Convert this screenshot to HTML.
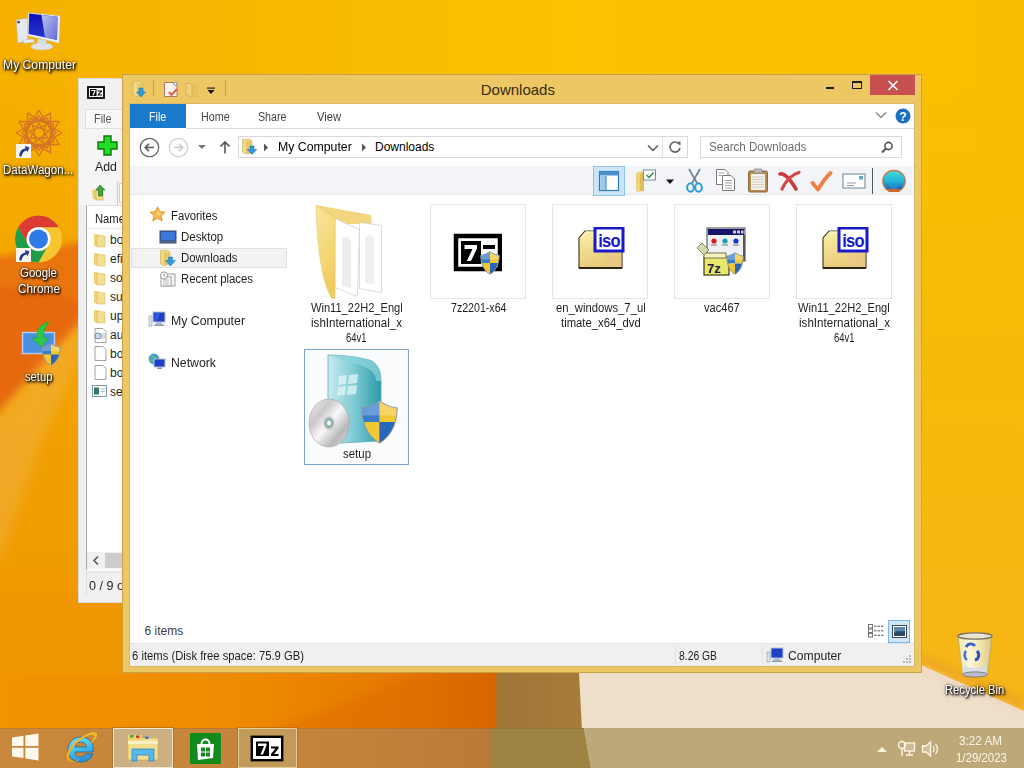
<!DOCTYPE html>
<html><head><meta charset="utf-8">
<style>
*{box-sizing:border-box}
html,body{margin:0;padding:0}
body{width:1024px;height:768px;overflow:hidden;position:relative;font-family:"Liberation Sans",sans-serif;font-size:12px;color:#000;background:#F5B400}
.a{position:absolute;display:block}
.t{position:absolute;white-space:nowrap;line-height:1}
.sh{text-shadow:0 0 2px #000,1px 1px 2px #000,0 1px 1px #000}
</style></head><body>
<svg class="a" style="left:0;top:0" width="1024" height="768" viewBox="0 0 1024 768">
  <defs>
    <linearGradient id="gTop" x1="0" y1="0" x2="1" y2="0">
      <stop offset="0" stop-color="#F5B000"/><stop offset="0.55" stop-color="#FBC200"/><stop offset="1" stop-color="#FABE00"/>
    </linearGradient>
    <linearGradient id="gBotL" x1="0" y1="0" x2="1" y2="0">
      <stop offset="0" stop-color="#F19400"/><stop offset="0.5" stop-color="#EE8A00"/><stop offset="0.85" stop-color="#E47600"/><stop offset="1" stop-color="#D66200"/>
    </linearGradient>
    <linearGradient id="gLeft" x1="0" y1="0" x2="0" y2="1">
      <stop offset="0" stop-color="#F4A600" stop-opacity="0"/><stop offset="0.25" stop-color="#F4A600"/><stop offset="0.6" stop-color="#F09E00"/><stop offset="1" stop-color="#F09400"/>
    </linearGradient>
    <linearGradient id="gRight" x1="0" y1="0" x2="0" y2="1">
      <stop offset="0" stop-color="#F8BA08" stop-opacity="0"/><stop offset="0.4" stop-color="#F8BA08"/><stop offset="1" stop-color="#F5B61C"/>
    </linearGradient>
    <filter id="bl1" x="-5%" y="-5%" width="110%" height="110%"><feGaussianBlur stdDeviation="1.2"/></filter>
    <filter id="bl3" x="-20%" y="-20%" width="140%" height="140%"><feGaussianBlur stdDeviation="3"/></filter>
    <filter id="bl6" x="-30%" y="-30%" width="160%" height="160%"><feGaussianBlur stdDeviation="7"/></filter>
  </defs>
  <rect x="0" y="0" width="1024" height="768" fill="url(#gTop)"/>
  <g filter="url(#bl6)"><rect x="-20" y="80" width="150" height="700" fill="url(#gLeft)"/></g>
  <rect x="900" y="80" width="130" height="688" fill="url(#gRight)"/>
  <g filter="url(#bl3)">
    <path d="M-10 258 C20 254 60 246 130 232 L130 268 L80 324 L0 411 L-10 422 Z" fill="#E97610"/>
    <path d="M-10 285 C20 286 50 292 80 300 L80 324 L0 411 L-10 422 Z" fill="#E4640C" opacity="0.7"/>
  </g>
  <g filter="url(#bl6)">
    <path d="M80 322 L90 332 L42 440 L0 560 L-10 560 L-10 424 L0 413 Z" fill="#F2B24A" opacity="0.5"/>
  </g>
  <rect x="0" y="600" width="500" height="168" fill="url(#gBotL)"/>
  <g filter="url(#bl6)"><rect x="-20" y="590" width="150" height="200" fill="#F09600"/></g>
  <rect x="0" y="675" width="500" height="93" fill="url(#gBotL)"/>
  <g filter="url(#bl6)"><path d="M250 740 L420 673 L500 660 L500 740 Z" fill="#DC6400" opacity="0.45"/></g>
  <defs><linearGradient id="brg" x1="0" y1="0" x2="1" y2="0"><stop offset="0" stop-color="#9E7636"/><stop offset="1" stop-color="#A87C3C"/></linearGradient></defs><g filter="url(#bl1)"><path d="M496 560 L576 560 L587 768 L496 768 Z" fill="url(#brg)"/></g>
  <g filter="url(#bl3)"><path d="M921 652 L1024 698 L1024 711 L921 665 Z" fill="#EFA624" opacity="0.75"/></g>
  <path d="M573 560 L921 560 L921 665 L1024 711 L1024 768 L584 768 Z" fill="#EEDFC9"/>
  <g filter="url(#bl3)"><path d="M921 666 L1024 712 L1024 716 L921 670 Z" fill="#F2CFB0" opacity="0.6"/></g>
  
</svg>
<div class="t" style="left:2.50px;top:59.44px;font-size:12px;color:#fff;transform:scaleX(1.0134);transform-origin:0 0;text-shadow:1px 1px 2px #000,0 0 3px rgba(0,0,0,0.9),1px 2px 3px rgba(0,0,0,0.8);">My Computer</div>
<div class="t" style="left:3.45px;top:163.64px;font-size:12px;color:#fff;transform:scaleX(0.9638);transform-origin:0 0;text-shadow:1px 1px 2px #000,0 0 3px rgba(0,0,0,0.9),1px 2px 3px rgba(0,0,0,0.8);">DataWagon...</div>
<div class="t" style="left:19.50px;top:267.34px;font-size:12px;color:#fff;transform:scaleX(0.9560);transform-origin:0 0;text-shadow:1px 1px 2px #000,0 0 3px rgba(0,0,0,0.9),1px 2px 3px rgba(0,0,0,0.8);">Google</div>
<div class="t" style="left:18.00px;top:282.54px;font-size:12px;color:#fff;transform:scaleX(0.9839);transform-origin:0 0;text-shadow:1px 1px 2px #000,0 0 3px rgba(0,0,0,0.9),1px 2px 3px rgba(0,0,0,0.8);">Chrome</div>
<div class="t" style="left:24.60px;top:371.34px;font-size:12px;color:#fff;transform:scaleX(0.9333);transform-origin:0 0;text-shadow:1px 1px 2px #000,0 0 3px rgba(0,0,0,0.9),1px 2px 3px rgba(0,0,0,0.8);">setup</div>
<div class="t" style="left:945.20px;top:683.64px;font-size:12px;color:#fff;transform:scaleX(0.9344);transform-origin:0 0;text-shadow:1px 1px 2px #000,0 0 3px rgba(0,0,0,0.9),1px 2px 3px rgba(0,0,0,0.8);">Recycle Bin</div>
<div class="a" style="left:78px;top:78px;width:50px;height:525px;background:#F0F0F0;border:1px solid #DADADA"></div>
<svg class="a" style="left:87px;top:86px;" width="18" height="13" viewBox="0 0 18 13"><rect x="1" y="1" width="16" height="11" fill="#fff" stroke="#000" stroke-width="1.8"/><rect x="3" y="3" width="6.5" height="7" fill="#000"/><path d="M4 4 H8.5 V5 L6.5 9.5 H5.3 L7.2 5 H4 Z" fill="#fff"/><path d="M10.5 4.5 H15 V5.5 L12 8.5 H15 V9.5 H10.5 V8.5 L13.5 5.5 H10.5 Z" fill="#000"/></svg>
<div class="a" style="left:85px;top:109px;width:40px;height:20px;background:#F8F8F8;border:1px solid #E0E0E0;border-right:none"></div>
<div class="t" style="left:94.00px;top:112.84px;font-size:12px;color:#555;transform:scaleX(0.9047);transform-origin:0 0;">File</div>
<div class="a" style="left:79px;top:129px;width:48px;height:76px;background:#F5F5F5"></div>
<svg class="a" style="left:97px;top:135px;" width="21" height="21" viewBox="0 0 21 21"><path d="M7 1 H14 V7 H20 V14 H14 V20 H7 V14 H1 V7 H7 Z" fill="#22DD22" stroke="#0A7A0A" stroke-width="1.4"/></svg>
<div class="t" style="left:95.00px;top:160.84px;font-size:12px;color:#222;transform:scaleX(1.0300);transform-origin:0 0;">Add</div>
<svg class="a" style="left:91px;top:184px;" width="16" height="17" viewBox="0 0 16 17"><path d="M1 6 L7 5 L7 16 L2 15 Z" fill="#E8D070"/><path d="M5 6 L12 7 L12 16 L5 16 Z" fill="#F2DC88" stroke="#B8A040" stroke-width="0.5"/><path d="M9 1 L14 6 L11.5 6 L11.5 12 L7.5 12 L7.5 6 L5 6 Z" fill="#3CA83C" stroke="#1A6A1A" stroke-width="0.6"/></svg>
<div class="a" style="left:117px;top:181px;width:1px;height:24px;background:#C8C8C8"></div>
<div class="a" style="left:119px;top:183px;width:5px;height:20px;background:#fff;border:1px solid #D0D0D0;border-right:none"></div>
<div class="a" style="left:86px;top:205px;width:40px;height:397px;background:#fff;border-left:1px solid #A8A8A8;border-top:1px solid #E0E0E0"></div>
<div class="t" style="left:94.60px;top:213.04px;font-size:12px;color:#1E1E1E;transform:scaleX(0.9370);transform-origin:0 0;">Name</div>
<div class="a" style="left:87px;top:228px;width:36px;height:1px;background:#E8E8E8"></div>
<svg class="a" style="left:93px;top:233.0px;" width="13" height="15" viewBox="0 0 13 15"><path d="M1 1 L6 1.5 L6 14 L1 13 Z" fill="#EFD27A"/><path d="M4 2.5 L12 3 L12 14 L4 14 Z" fill="#F3DE92" stroke="#D0B050" stroke-width="0.5"/></svg>
<div class="t" style="left:110.00px;top:234.34px;font-size:12px;color:#1E1E1E;">bo</div>
<svg class="a" style="left:93px;top:251.9px;" width="13" height="15" viewBox="0 0 13 15"><path d="M1 1 L6 1.5 L6 14 L1 13 Z" fill="#EFD27A"/><path d="M4 2.5 L12 3 L12 14 L4 14 Z" fill="#F3DE92" stroke="#D0B050" stroke-width="0.5"/></svg>
<div class="t" style="left:110.00px;top:253.24px;font-size:12px;color:#1E1E1E;">efi</div>
<svg class="a" style="left:93px;top:270.8px;" width="13" height="15" viewBox="0 0 13 15"><path d="M1 1 L6 1.5 L6 14 L1 13 Z" fill="#EFD27A"/><path d="M4 2.5 L12 3 L12 14 L4 14 Z" fill="#F3DE92" stroke="#D0B050" stroke-width="0.5"/></svg>
<div class="t" style="left:110.00px;top:272.14px;font-size:12px;color:#1E1E1E;">so</div>
<svg class="a" style="left:93px;top:289.7px;" width="13" height="15" viewBox="0 0 13 15"><path d="M1 1 L6 1.5 L6 14 L1 13 Z" fill="#EFD27A"/><path d="M4 2.5 L12 3 L12 14 L4 14 Z" fill="#F3DE92" stroke="#D0B050" stroke-width="0.5"/></svg>
<div class="t" style="left:110.00px;top:291.04px;font-size:12px;color:#1E1E1E;">su</div>
<svg class="a" style="left:93px;top:308.6px;" width="13" height="15" viewBox="0 0 13 15"><path d="M1 1 L6 1.5 L6 14 L1 13 Z" fill="#EFD27A"/><path d="M4 2.5 L12 3 L12 14 L4 14 Z" fill="#F3DE92" stroke="#D0B050" stroke-width="0.5"/></svg>
<div class="t" style="left:110.00px;top:309.94px;font-size:12px;color:#1E1E1E;">up</div>
<svg class="a" style="left:93px;top:327.5px;" width="14" height="15" viewBox="0 0 14 15"><path d="M2 0.5 H10 L13 3.5 V14.5 H2 Z" fill="#fff" stroke="#8A8A8A" stroke-width="0.8"/><circle cx="5" cy="8" r="3" fill="#C8D8E8" stroke="#4A6A8A" stroke-width="0.7"/><path d="M8 6 H12 M8 8 H12 M8 10 H12" stroke="#888" stroke-width="0.6"/></svg>
<div class="t" style="left:110.00px;top:328.84px;font-size:12px;color:#1E1E1E;">au</div>
<svg class="a" style="left:93px;top:346.4px;" width="14" height="15" viewBox="0 0 14 15"><path d="M2 0.5 H10 L13 3.5 V14.5 H2 Z" fill="#fff" stroke="#8A8A8A" stroke-width="0.8"/></svg>
<div class="t" style="left:110.00px;top:347.74px;font-size:12px;color:#1E1E1E;">bo</div>
<svg class="a" style="left:93px;top:365.29999999999995px;" width="14" height="15" viewBox="0 0 14 15"><path d="M2 0.5 H10 L13 3.5 V14.5 H2 Z" fill="#fff" stroke="#8A8A8A" stroke-width="0.8"/></svg>
<div class="t" style="left:110.00px;top:366.64px;font-size:12px;color:#1E1E1E;">bo</div>
<svg class="a" style="left:92px;top:384.2px;" width="16" height="14" viewBox="0 0 16 14"><rect x="0.5" y="1.5" width="14" height="11" fill="#fff" stroke="#5A7A8A" stroke-width="0.8"/><rect x="2" y="3.5" width="5" height="7" fill="#2E7A6A"/><path d="M8.5 5 H13 M8.5 7.5 H13" stroke="#8AA8C8" stroke-width="0.8"/></svg>
<div class="t" style="left:110.00px;top:385.54px;font-size:12px;color:#1E1E1E;">se</div>
<div class="a" style="left:87px;top:552px;width:36px;height:17px;background:#F0F0F0"></div>
<svg class="a" style="left:91px;top:555px;" width="10" height="11" viewBox="0 0 10 11"><path d="M7 1.5 L3 5.5 L7 9.5" fill="none" stroke="#555" stroke-width="1.6"/></svg>
<div class="a" style="left:105px;top:553px;width:18px;height:15px;background:#CDCDCD"></div>
<div class="a" style="left:79px;top:570px;width:48px;height:32px;background:#F0F0F0"></div>
<div class="a" style="left:86px;top:572px;width:40px;height:24px;border-left:1px solid #E0E0E0;border-top:1px solid #E0E0E0"></div>
<div class="t" style="left:88.50px;top:580.34px;font-size:12px;color:#1E1E1E;transform:scaleX(1.0492);transform-origin:0 0;">0 / 9 o</div>
<div class="a" style="left:122px;top:74px;width:800px;height:599px;background:#ECC763;border:1px solid #C9A04A"></div>
<div class="a" style="left:130px;top:104px;width:784px;height:562px;background:#fff;box-shadow:0 0 0 1px #D9B866"></div>
<div class="t" style="left:480.75px;top:82.30px;font-size:15px;color:#3A2C14;">Downloads</div>
<div class="a" style="left:870px;top:75px;width:45px;height:20px;background:#C75050"></div>
<svg class="a" style="left:131px;top:80px;" width="16" height="18" viewBox="0 0 16 18">
<path d="M2 2 L8 1 L12 3 L12 15 L6 17 L2 15 Z" fill="#F1D98A" stroke="#C9A94A" stroke-width="0.6"/>
<path d="M6 4 L12 3 L12 15 L6 17 Z" fill="#E6C766"/>
<path d="M8 8 L12 8 L12 12 L14.5 12 L10 17 L5.5 12 L8 12 Z" fill="#2C9BE0" stroke="#1A6FB0" stroke-width="0.5"/>
</svg>
<div class="a" style="left:153px;top:80px;width:1px;height:16px;background:#C9A050"></div>
<svg class="a" style="left:163px;top:81px;" width="16" height="17" viewBox="0 0 16 17">
<path d="M1.5 1.5 L10 1.5 L14 5 L14 15.5 L1.5 15.5 Z" fill="#FBF3EE" stroke="#B07A60" stroke-width="1"/>
<circle cx="12.5" cy="2.8" r="1.6" fill="#fff" stroke="#5A70A0" stroke-width="0.8"/>
<path d="M6 11 L8.5 14 L14 8" fill="none" stroke="#E06050" stroke-width="2"/>
</svg>
<svg class="a" style="left:185px;top:82px;" width="15" height="16" viewBox="0 0 15 16">
<path d="M1 1 L7 2 L7 15 L1 13 Z" fill="#EFD27A"/>
<path d="M7 2 L13 3 L13 15 L7 15 Z" fill="#E3C35A"/>
<path d="M1 1 L7 2 L7 15 L1 13 Z" fill="none" stroke="#CBA645" stroke-width="0.6"/>
</svg>
<svg class="a" style="left:206px;top:86px;" width="10" height="9" viewBox="0 0 10 9"><rect x="1" y="1.5" width="8" height="1.2" fill="#222"/><path d="M1.5 4 L8.5 4 L5 8 Z" fill="#111"/></svg>
<div class="a" style="left:225px;top:80px;width:1px;height:16px;background:#C9A050"></div>
<div class="a" style="left:826px;top:87px;width:8px;height:2px;background:#1E1E1E"></div>
<div class="a" style="left:852px;top:81px;width:10px;height:8px;border:1px solid #1E1E1E;border-top-width:2px"></div>
<svg class="a" style="left:887px;top:80px;" width="12" height="11" viewBox="0 0 12 11"><path d="M1.5 1 L10.5 10 M10.5 1 L1.5 10" stroke="#fff" stroke-width="1.6"/></svg>
<div class="a" style="left:130px;top:104px;width:56px;height:24px;background:#1979CA"></div>
<div class="t" style="left:149.40px;top:110.84px;font-size:12px;color:#fff;transform:scaleX(0.8892);transform-origin:0 0;">File</div>
<div class="t" style="left:200.60px;top:110.84px;font-size:12px;color:#444;transform:scaleX(0.8933);transform-origin:0 0;">Home</div>
<div class="t" style="left:258.00px;top:110.84px;font-size:12px;color:#444;transform:scaleX(0.8866);transform-origin:0 0;">Share</div>
<div class="t" style="left:316.70px;top:110.84px;font-size:12px;color:#444;transform:scaleX(0.9342);transform-origin:0 0;">View</div>
<div class="a" style="left:186px;top:128px;width:728px;height:1px;background:#DADBDC"></div>
<svg class="a" style="left:875px;top:111px;" width="12" height="8" viewBox="0 0 12 8"><path d="M1 1.5 L6 6.5 L11 1.5" fill="none" stroke="#8A8A8A" stroke-width="1.5"/></svg>
<svg class="a" style="left:895px;top:108px;" width="16" height="16" viewBox="0 0 16 16"><circle cx="8" cy="8" r="7.5" fill="#1C6FC4"/><text x="8" y="12.6" text-anchor="middle" font-family="Liberation Sans" font-weight="bold" font-size="12" fill="#fff">?</text></svg>
<svg class="a" style="left:139px;top:137px;" width="21" height="21" viewBox="0 0 21 21"><circle cx="10.5" cy="10.5" r="9.2" fill="#fff" stroke="#666" stroke-width="1.3"/><path d="M15 10.5 L6.5 10.5 M10 6.8 L6.3 10.5 L10 14.2" fill="none" stroke="#555" stroke-width="1.6"/></svg>
<svg class="a" style="left:168px;top:137px;" width="21" height="21" viewBox="0 0 21 21"><circle cx="10.5" cy="10.5" r="9.2" fill="#fff" stroke="#D0D0D0" stroke-width="1.3"/><path d="M6 10.5 L14.5 10.5 M11 6.8 L14.7 10.5 L11 14.2" fill="none" stroke="#C8C8C8" stroke-width="1.6"/></svg>
<svg class="a" style="left:197px;top:144px;" width="10" height="6" viewBox="0 0 10 6"><path d="M1 1 L9 1 L5 5 Z" fill="#777"/></svg>
<svg class="a" style="left:218px;top:140px;" width="14" height="14" viewBox="0 0 14 14"><path d="M7 13.5 L7 2 M2.5 6.5 L7 2 L11.5 6.5" fill="none" stroke="#555" stroke-width="1.6"/></svg>
<div class="a" style="left:238px;top:136px;width:450px;height:22px;border:1px solid #D9D9D9;background:#fff"></div>
<div class="a" style="left:662px;top:137px;width:1px;height:20px;background:#E2E2E2"></div>
<svg class="a" style="left:241px;top:138px;" width="17" height="17" viewBox="0 0 17 17">
<path d="M1.5 1.5 L8 1 L11 3 L11 15 L4 16 L1.5 14 Z" fill="#F1D98A" stroke="#C9A94A" stroke-width="0.6"/>
<path d="M5 3.5 L11 3 L11 15 L5 16 Z" fill="#E6C766"/>
<path d="M9 8 L13 8 L13 11.5 L15.8 11.5 L11 16.5 L6.2 11.5 L9 11.5 Z" fill="#2C9BE0" stroke="#1A6FB0" stroke-width="0.5"/>
</svg>
<svg class="a" style="left:263px;top:143px;" width="6" height="9" viewBox="0 0 6 9"><path d="M1 0.5 L5 4.5 L1 8.5 Z" fill="#555"/></svg>
<div class="t" style="left:278.00px;top:140.84px;font-size:12px;color:#000;transform:scaleX(1.0246);transform-origin:0 0;">My Computer</div>
<svg class="a" style="left:361px;top:143px;" width="6" height="9" viewBox="0 0 6 9"><path d="M1 0.5 L5 4.5 L1 8.5 Z" fill="#555"/></svg>
<div class="t" style="left:375.00px;top:140.84px;font-size:12px;color:#000;">Downloads</div>
<svg class="a" style="left:647px;top:144px;" width="12" height="8" viewBox="0 0 12 8"><path d="M1 1.5 L6 6.5 L11 1.5" fill="none" stroke="#555" stroke-width="1.5"/></svg>
<svg class="a" style="left:668px;top:140px;" width="14" height="14" viewBox="0 0 14 14"><path d="M11.2 4.2 A5 5 0 1 0 12 8" fill="none" stroke="#666" stroke-width="1.6"/><path d="M8.5 2 L12.5 1.5 L12.5 5.8 Z" fill="#666"/></svg>
<div class="a" style="left:700px;top:136px;width:202px;height:22px;border:1px solid #D9D9D9;background:#fff"></div>
<div class="t" style="left:709.00px;top:140.84px;font-size:12px;color:#6D6D6D;transform:scaleX(0.9669);transform-origin:0 0;">Search Downloads</div>
<svg class="a" style="left:880px;top:141px;" width="14" height="13" viewBox="0 0 14 13"><circle cx="8.5" cy="5" r="3.6" fill="none" stroke="#555" stroke-width="1.6"/><path d="M6 7.5 L2 11.5" stroke="#555" stroke-width="2"/></svg>
<div class="a" style="left:130px;top:166px;width:784px;height:29px;background:#F2F4F7;border-bottom:1px solid #E6E8EB"></div>
<div class="a" style="left:593px;top:166px;width:32px;height:30px;background:#CDE6F7;border:1px solid #8FC3EA"></div>
<svg class="a" style="left:598px;top:170px;" width="22" height="22" viewBox="0 0 22 22">
<rect x="1.5" y="1.5" width="19" height="19" fill="#fff" stroke="#2A7AC0" stroke-width="1.2"/>
<rect x="1.5" y="1.5" width="19" height="4" fill="#4A90D0"/>
<rect x="2.2" y="6" width="5.5" height="14" fill="#9CC8EC"/>
<path d="M8 6 L8 20.5" stroke="#2A7AC0" stroke-width="1"/>
</svg>
<svg class="a" style="left:634px;top:168px;" width="24" height="25" viewBox="0 0 24 25">
<path d="M2 5 L8 3 L10 5 L10 23 L3 24 L2 22 Z" fill="#EFD27A"/>
<path d="M6 6 L10 5 L10 23 L6 23 Z" fill="#E0BE55"/>
<rect x="9.5" y="2" width="12" height="10" fill="#fff" stroke="#6E8EA8" stroke-width="1"/>
<path d="M12.5 7 L15 9.5 L19.5 4.5" fill="none" stroke="#2E8B4E" stroke-width="1.4"/>
</svg>
<svg class="a" style="left:665px;top:179px;" width="10" height="6" viewBox="0 0 10 6"><path d="M1 0.5 L9 0.5 L5 5 Z" fill="#111"/></svg>
<svg class="a" style="left:686px;top:168px;" width="17" height="25" viewBox="0 0 17 25">
<path d="M3 1 L11 15 M14 1 L6 15" stroke="#6A8090" stroke-width="1.6"/>
<ellipse cx="4.5" cy="19.5" rx="3.3" ry="4.2" fill="none" stroke="#2A9AD8" stroke-width="2"/>
<ellipse cx="12.5" cy="19.5" rx="3.3" ry="4.2" fill="none" stroke="#2A9AD8" stroke-width="2"/>
</svg>
<svg class="a" style="left:715px;top:168px;" width="22" height="24" viewBox="0 0 22 24">
<path d="M1.5 1.5 L10 1.5 L13 4.5 L13 16.5 L1.5 16.5 Z" fill="#fff" stroke="#7A7A7A" stroke-width="1"/>
<path d="M7.5 7.5 L16 7.5 L19.5 11 L19.5 22.5 L7.5 22.5 Z" fill="#fff" stroke="#7A7A7A" stroke-width="1"/>
<path d="M10 12.5 H17 M10 15 H17 M10 17.5 H17 M10 20 H17" stroke="#8A8A8A" stroke-width="0.8"/>
<path d="M3.5 5 H9 M3.5 7.5 H7" stroke="#8A8A8A" stroke-width="0.8"/>
</svg>
<svg class="a" style="left:747px;top:168px;" width="22" height="25" viewBox="0 0 22 25">
<rect x="1.5" y="3" width="19" height="21" rx="1.5" fill="#B48A52" stroke="#906838" stroke-width="1"/>
<rect x="4" y="6" width="14" height="16" fill="#F4F2EA"/>
<path d="M5 9 H17 M5 11.5 H17 M5 14 H17 M5 16.5 H17 M5 19 H17" stroke="#C9C3B6" stroke-width="0.8"/>
<rect x="7" y="1" width="8" height="4" rx="1" fill="#BDBDBD" stroke="#8A8A8A" stroke-width="0.8"/>
</svg>
<svg class="a" style="left:777px;top:170px;" width="24" height="22" viewBox="0 0 24 22">
<path d="M3 4 C7 3 13 9 19 19" fill="none" stroke="#C83A3A" stroke-width="3.6" stroke-linecap="round"/>
<path d="M22 2.5 C16 4 9 10 5 19" fill="none" stroke="#D24848" stroke-width="3.2" stroke-linecap="round"/>
</svg>
<svg class="a" style="left:809px;top:170px;" width="24" height="22" viewBox="0 0 24 22">
<path d="M3.5 13 L9 19.5 C13 13 17 7 21.5 3" fill="none" stroke="#EE8048" stroke-width="3.8" stroke-linecap="round" stroke-linejoin="round"/>
</svg>
<svg class="a" style="left:842px;top:173px;" width="24" height="16" viewBox="0 0 24 16">
<rect x="1" y="1" width="22" height="14" fill="#fff" stroke="#8096A8" stroke-width="1.2"/>
<rect x="17" y="3" width="4" height="3.5" fill="#5AA8C8"/>
<path d="M5 10 H14 M5 12.5 H12" stroke="#8A9AA8" stroke-width="1"/>
</svg>
<div class="a" style="left:872px;top:168px;width:1px;height:26px;background:#555"></div>
<svg class="a" style="left:881px;top:169px;" width="26" height="24" viewBox="0 0 26 24">
<defs><linearGradient id="shellg" x1="0" y1="0" x2="0" y2="1"><stop offset="0" stop-color="#40E0D8"/><stop offset="0.55" stop-color="#22B0D8"/><stop offset="1" stop-color="#1A5AB8"/></linearGradient></defs>
<path d="M6 21 C1.5 17 0.5 11 3 7 C6 2.5 10 1.5 13 1.5 C16 1.5 20 2.5 23 7 C25.5 11 24.5 17 20 21 Z" fill="url(#shellg)" stroke="#C87848" stroke-width="1.3"/>
<path d="M13 22 L13 3 M13 22 L7 4.5 M13 22 L19 4.5 M13 22 L3.5 9 M13 22 L22.5 9" stroke="#30C8C8" stroke-width="0.6" opacity="0.6"/>
<path d="M6.5 20 L19.5 20 L18.5 23 L7.5 23 Z" fill="#C86A30"/>
</svg>
<svg class="a" style="left:149px;top:206px;" width="17" height="16" viewBox="0 0 17 16">
<path d="M8.5 0.8 L10.8 5.6 L16 6.2 L12.1 9.7 L13.2 15 L8.5 12.3 L3.8 15 L4.9 9.7 L1 6.2 L6.2 5.6 Z" fill="#F8B84A" stroke="#E08A1A" stroke-width="0.8"/>
<path d="M8.5 3 L10 6.8 L13.5 7.2 L8.5 10 Z" fill="#FFE08A" opacity="0.7"/>
</svg>
<div class="t" style="left:171.40px;top:209.84px;font-size:12px;color:#1E1E1E;transform:scaleX(0.9400);transform-origin:0 0;">Favorites</div>
<svg class="a" style="left:159px;top:230px;" width="18" height="14" viewBox="0 0 18 14">
<rect x="1" y="1" width="16" height="12" fill="#2C5BB8" stroke="#3E4E6A" stroke-width="1"/>
<rect x="2" y="2" width="14" height="8" fill="#3C78D8"/>
<rect x="1" y="10.5" width="16" height="2.5" fill="#506080"/>
</svg>
<div class="t" style="left:181.40px;top:231.04px;font-size:12px;color:#1E1E1E;transform:scaleX(0.9584);transform-origin:0 0;">Desktop</div>
<div class="a" style="left:131px;top:248px;width:156px;height:20px;background:#F2F2F2;border:1px solid #E0E0E0"></div>
<svg class="a" style="left:159px;top:249px;" width="18" height="18" viewBox="0 0 18 18">
<path d="M1.5 1.5 L8 1 L11 3 L11 15 L4 16.5 L1.5 14.5 Z" fill="#F1D98A" stroke="#C9A94A" stroke-width="0.6"/>
<path d="M5 3.5 L11 3 L11 15 L5 16.5 Z" fill="#E6C766"/>
<path d="M9.5 8 L13.5 8 L13.5 11.5 L16.5 11.5 L11.5 17 L6.5 11.5 L9.5 11.5 Z" fill="#2C9BE0" stroke="#1A6FB0" stroke-width="0.5"/>
</svg>
<div class="t" style="left:181.40px;top:251.84px;font-size:12px;color:#1E1E1E;transform:scaleX(0.9516);transform-origin:0 0;">Downloads</div>
<svg class="a" style="left:159px;top:271px;" width="18" height="16" viewBox="0 0 18 16">
<rect x="4" y="3" width="12" height="12" fill="#F4F4F4" stroke="#8A8A8A" stroke-width="0.8"/>
<rect x="2" y="6" width="10" height="9" fill="#fff" stroke="#8A8A8A" stroke-width="0.8"/>
<circle cx="5" cy="4.5" r="3.6" fill="#fff" stroke="#7A7A7A" stroke-width="0.8"/>
<path d="M5 2.5 L5 4.5 L6.5 5.5" stroke="#555" stroke-width="0.7" fill="none"/>
<path d="M4 9 H10 M4 11 H10 M4 13 H10" stroke="#999" stroke-width="0.7"/>
</svg>
<div class="t" style="left:181.40px;top:272.84px;font-size:12px;color:#1E1E1E;transform:scaleX(0.9468);transform-origin:0 0;">Recent places</div>
<svg class="a" style="left:148px;top:311px;" width="18" height="16" viewBox="0 0 18 16">
<rect x="1" y="5" width="3" height="10" fill="#DDE4EC" stroke="#8A98A8" stroke-width="0.6"/>
<rect x="5" y="1" width="12" height="10" fill="#1E3FC8" stroke="#B8C4D8" stroke-width="1"/>
<path d="M8 2 L12 2 L9 10 L6 10 Z" fill="#4A6AE8" opacity="0.6"/>
<rect x="8" y="11.5" width="6" height="2" fill="#A8B4C4"/>
<rect x="6" y="13.5" width="10" height="1.5" fill="#8A98A8"/>
</svg>
<div class="t" style="left:171.40px;top:314.84px;font-size:12px;color:#1E1E1E;transform:scaleX(1.0273);transform-origin:0 0;">My Computer</div>
<svg class="a" style="left:148px;top:353px;" width="18" height="18" viewBox="0 0 18 18">
<circle cx="6" cy="6" r="5" fill="#3AA0D8" stroke="#2A7AB0" stroke-width="0.6"/>
<path d="M3 4 C5 3 6 5 8 4 M2 7 C4 8 6 7 9 8" stroke="#6CC060" stroke-width="1.4" fill="none"/>
<rect x="6" y="6" width="11" height="8" fill="#1E3FC8" stroke="#B8C4D8" stroke-width="1"/>
<rect x="9" y="14.5" width="5" height="1.5" fill="#8A98A8"/>
</svg>
<div class="t" style="left:171.40px;top:356.64px;font-size:12px;color:#1E1E1E;transform:scaleX(1.0224);transform-origin:0 0;">Network</div>
<div class="t" style="left:310.65px;top:301.84px;font-size:12px;color:#1E1E1E;transform:scaleX(0.9245);transform-origin:0 0;">Win11_22H2_Engl</div>
<div class="t" style="left:311.00px;top:316.84px;font-size:12px;color:#1E1E1E;transform:scaleX(0.9674);transform-origin:0 0;">ishInternational_x</div>
<div class="t" style="left:346.25px;top:331.84px;font-size:12px;color:#1E1E1E;transform:scaleX(0.7875);transform-origin:0 0;">64v1</div>
<div class="t" style="left:450.75px;top:301.84px;font-size:12px;color:#1E1E1E;transform:scaleX(0.8849);transform-origin:0 0;">7z2201-x64</div>
<div class="t" style="left:555.65px;top:301.84px;font-size:12px;color:#1E1E1E;transform:scaleX(0.9402);transform-origin:0 0;">en_windows_7_ul</div>
<div class="t" style="left:560.65px;top:316.84px;font-size:12px;color:#1E1E1E;transform:scaleX(0.9406);transform-origin:0 0;">timate_x64_dvd</div>
<div class="t" style="left:704.15px;top:301.84px;font-size:12px;color:#1E1E1E;transform:scaleX(0.9224);transform-origin:0 0;">vac467</div>
<div class="t" style="left:798.15px;top:301.84px;font-size:12px;color:#1E1E1E;transform:scaleX(0.9245);transform-origin:0 0;">Win11_22H2_Engl</div>
<div class="t" style="left:798.50px;top:316.84px;font-size:12px;color:#1E1E1E;transform:scaleX(0.9674);transform-origin:0 0;">ishInternational_x</div>
<div class="t" style="left:833.75px;top:331.84px;font-size:12px;color:#1E1E1E;transform:scaleX(0.7875);transform-origin:0 0;">64v1</div>
<div class="a" style="left:430px;top:204px;width:96px;height:95px;border:1px solid #E5E5E5"></div>
<div class="a" style="left:552px;top:204px;width:96px;height:95px;border:1px solid #E5E5E5"></div>
<div class="a" style="left:674px;top:204px;width:96px;height:95px;border:1px solid #E5E5E5"></div>
<div class="a" style="left:796px;top:204px;width:96px;height:95px;border:1px solid #E5E5E5"></div>
<div class="a" style="left:304px;top:349px;width:105px;height:116px;border:1px solid #7DA2CE;background:#FAFCFE"></div>
<div class="t" style="left:342.50px;top:448.34px;font-size:12px;color:#1E1E1E;transform:scaleX(0.9537);transform-origin:0 0;">setup</div>
<div class="t" style="left:144.60px;top:624.84px;font-size:12px;color:#3C3C3C;">6 items</div>
<svg class="a" style="left:868px;top:624px;" width="17" height="14" viewBox="0 0 17 14">
<rect x="0.5" y="0.5" width="4" height="3.5" fill="none" stroke="#666" stroke-width="0.9"/>
<rect x="0.5" y="5" width="4" height="3.5" fill="none" stroke="#666" stroke-width="0.9"/>
<rect x="0.5" y="9.5" width="4" height="3.5" fill="none" stroke="#666" stroke-width="0.9"/>
<path d="M6 2.2 H16 M6 6.8 H16 M6 11.3 H16" stroke="#555" stroke-width="1" stroke-dasharray="2.5 1"/>
</svg>
<div class="a" style="left:888px;top:620px;width:22px;height:23px;background:#CDE8F8;border:1px solid #7EB4EA"></div>
<svg class="a" style="left:892px;top:625px;" width="15" height="13" viewBox="0 0 15 13">
<rect x="0.5" y="0.5" width="14" height="12" fill="#fff" stroke="#445" stroke-width="1"/>
<rect x="2" y="2" width="11" height="9" fill="#5A88B0"/>
<path d="M2 8 C5 5 8 7 13 6 L13 11 L2 11 Z" fill="#2A4A6A"/>
</svg>
<div class="a" style="left:130px;top:643px;width:784px;height:23px;background:#F0F0F0;border-top:1px solid #E3E3E3"></div>
<div class="t" style="left:132.00px;top:649.84px;font-size:12px;color:#1E1E1E;transform:scaleX(0.9378);transform-origin:0 0;">6 items (Disk free space: 75.9 GB)</div>
<div class="a" style="left:675px;top:646px;width:1px;height:19px;background:#E0E0E0"></div>
<div class="a" style="left:762px;top:646px;width:1px;height:19px;background:#E0E0E0"></div>
<div class="t" style="left:679.30px;top:650.14px;font-size:12px;color:#1E1E1E;transform:scaleX(0.8630);transform-origin:0 0;">8.26 GB</div>
<svg class="a" style="left:766px;top:647px;" width="18" height="16" viewBox="0 0 18 16">
<rect x="1" y="5" width="3" height="10" fill="#DDE4EC" stroke="#8A98A8" stroke-width="0.6"/>
<rect x="5" y="1" width="12" height="10" fill="#1E3FC8" stroke="#B8C4D8" stroke-width="1"/>
<rect x="8" y="11.5" width="6" height="2" fill="#A8B4C4"/>
<rect x="6" y="13.5" width="10" height="1.5" fill="#8A98A8"/>
</svg>
<div class="t" style="left:787.60px;top:649.84px;font-size:12px;color:#1E1E1E;transform:scaleX(1.0135);transform-origin:0 0;">Computer</div>
<svg class="a" style="left:902px;top:654px;" width="10" height="10" viewBox="0 0 10 10"><g fill="#B8B8B8"><rect x="7" y="1" width="2" height="2"/><rect x="4" y="4" width="2" height="2"/><rect x="7" y="4" width="2" height="2"/><rect x="1" y="7" width="2" height="2"/><rect x="4" y="7" width="2" height="2"/><rect x="7" y="7" width="2" height="2"/></g></svg>
<svg class="a" style="left:305px;top:198px;" width="90" height="105" viewBox="0 0 90 105">
<defs>
<linearGradient id="fcov" x1="0" y1="0" x2="0.3" y2="1"><stop offset="0" stop-color="#F8E49C"/><stop offset="0.6" stop-color="#F4D878"/><stop offset="1" stop-color="#EFCB5E"/></linearGradient>
</defs>
<path d="M11 7 L66 17 L67 26 L30 26 Z" fill="#F2D67E"/>
<path d="M54.5 24.5 L76.5 27.5 L76.5 94.5 L54.5 90.5 Z" fill="#FFFFFF" stroke="#D4D4D4" stroke-width="0.8"/>
<path d="M60 40 Q64 34 69 40 L69 86 L60 85 Z" fill="#EFEFEF"/>
<path d="M30 20.5 L54.5 31.5 L52.5 98.5 L30 89.5 Z" fill="#FFFFFF" stroke="#CFCFCF" stroke-width="0.8"/>
<path d="M37 42 Q41 35 46 43 L46 90 L37 88 Z" fill="#EDEDED"/>
<path d="M11 7 L30 20.5 L30 100 L27.5 101 C18 88 12 55 11 7 Z" fill="url(#fcov)" stroke="#E6C260" stroke-width="0.5"/>
</svg>
<svg class="a" style="left:452px;top:232px;" width="50" height="44" viewBox="0 0 50 44">
<rect x="4" y="4" width="44" height="33" fill="#fff" stroke="#000" stroke-width="4.5"/>
<rect x="9" y="9" width="20" height="23" fill="#000"/>
<path d="M12.5 13 L25 13 L25 16.5 L19 29 L14.8 29 L20.5 17 L12.5 17 Z" fill="#fff"/>
<rect x="31" y="13" width="12" height="4" fill="#000"/>
</svg>
<svg class="a" style="left:480px;top:251px;" width="20" height="24" viewBox="0 0 20 24">
<defs><clipPath id="sh1"><path d="M10.0 0.8 C14.0 3.3600000000000003 17.0 4.08 19.2 4.32 C19.2 14.399999999999999 15.0 20.4 10.0 23.2 C5.0 20.4 0.8 14.399999999999999 0.8 4.32 C3.0 4.08 6.0 3.3600000000000003 10.0 0.8 Z"/></clipPath></defs>
<g clip-path="url(#sh1)">
<rect x="0" y="0" width="10.0" height="12.0" fill="#3A7CC8"/>
<rect x="10.0" y="0" width="10.0" height="12.0" fill="#F2C832"/>
<rect x="0" y="12.0" width="10.0" height="12.0" fill="#F2C832"/>
<rect x="10.0" y="12.0" width="10.0" height="12.0" fill="#2A66B8"/>
<rect x="0" y="0" width="20" height="8.399999999999999" fill="#fff" opacity="0.25"/>
</g>
<path d="M10.0 0.8 C14.0 3.3600000000000003 17.0 4.08 19.2 4.32 C19.2 14.399999999999999 15.0 20.4 10.0 23.2 C5.0 20.4 0.8 14.399999999999999 0.8 4.32 C3.0 4.08 6.0 3.3600000000000003 10.0 0.8 Z" fill="none" stroke="#8A96A8" stroke-width="1"/>
</svg>
<svg class="a" style="left:575px;top:227px;" width="50" height="44" viewBox="0 0 50 44">
<defs><linearGradient id="isog" x1="0" y1="0" x2="0.3" y2="1"><stop offset="0" stop-color="#FBF1A8"/><stop offset="1" stop-color="#EAC978"/></linearGradient></defs>
<path d="M4 11 L10 4 L47 4 L47 41 L4 41 Z" fill="url(#isog)" stroke="#4A4020" stroke-width="1.2"/><path d="M30 22 L46.5 22 L46.5 40.5 L30 40.5 Z" fill="#E8C88A" opacity="0.6"/>
<path d="M5 11.5 L10.5 5 L20 5" stroke="#FFFBE0" stroke-width="1" fill="none"/>
<path d="M4 41 L47 41" stroke="#2A2410" stroke-width="2"/>
<rect x="20" y="1" width="28" height="23" fill="#fff" stroke="#1A1AC8" stroke-width="3"/>
<text x="34" y="20" text-anchor="middle" font-family="Liberation Sans" font-weight="bold" font-size="18" fill="#1A1AC8" letter-spacing="-0.8" transform="translate(34 0) scale(0.92 1) translate(-34 0)">iso</text>
</svg>
<svg class="a" style="left:819px;top:227px;" width="50" height="44" viewBox="0 0 50 44">
<defs><linearGradient id="isog" x1="0" y1="0" x2="0.3" y2="1"><stop offset="0" stop-color="#FBF1A8"/><stop offset="1" stop-color="#EAC978"/></linearGradient></defs>
<path d="M4 11 L10 4 L47 4 L47 41 L4 41 Z" fill="url(#isog)" stroke="#4A4020" stroke-width="1.2"/><path d="M30 22 L46.5 22 L46.5 40.5 L30 40.5 Z" fill="#E8C88A" opacity="0.6"/>
<path d="M5 11.5 L10.5 5 L20 5" stroke="#FFFBE0" stroke-width="1" fill="none"/>
<path d="M4 41 L47 41" stroke="#2A2410" stroke-width="2"/>
<rect x="20" y="1" width="28" height="23" fill="#fff" stroke="#1A1AC8" stroke-width="3"/>
<text x="34" y="20" text-anchor="middle" font-family="Liberation Sans" font-weight="bold" font-size="18" fill="#1A1AC8" letter-spacing="-0.8" transform="translate(34 0) scale(0.92 1) translate(-34 0)">iso</text>
</svg>
<svg class="a" style="left:695px;top:226px;" width="54" height="52" viewBox="0 0 54 52">
<rect x="12" y="2" width="38" height="33" fill="#EEF0F4" stroke="#444" stroke-width="1"/>
<rect x="13" y="3" width="36" height="6" fill="#14146A"/>
<rect x="38" y="4.5" width="3" height="3" fill="#ccc"/><rect x="42" y="4.5" width="3" height="3" fill="#ccc"/><rect x="46" y="4.5" width="2.5" height="3" fill="#ccc"/>
<rect x="48" y="9" width="2" height="26" fill="#555"/>
<circle cx="19" cy="15" r="2.6" fill="#D81818"/><circle cx="30" cy="15" r="2.6" fill="#16A0A8"/><circle cx="41" cy="15" r="2.6" fill="#1838C8"/>
<path d="M16 19 H22 M27 19 H33 M38 19 H44" stroke="#777" stroke-width="1"/>
<rect x="9" y="31" width="25" height="18" fill="#E8E870" stroke="#3A3A10" stroke-width="1.2"/>
<rect x="9" y="27" width="22" height="5" fill="#F4F4C0" stroke="#5A5A20" stroke-width="0.8"/>
<path d="M2 22 L7 17 L14 24 L9 29 Z" fill="#D8D8B0" stroke="#707050" stroke-width="0.8"/>
<text x="12" y="46.5" font-family="Liberation Sans" font-weight="bold" font-size="13" fill="#1A1A40">7z</text>
</svg>
<svg class="a" style="left:726px;top:252px;" width="18" height="23" viewBox="0 0 18 23">
<defs><clipPath id="sh2"><path d="M9.0 0.8 C12.6 3.22 15.299999999999999 3.91 17.2 4.14 C17.2 13.799999999999999 13.5 19.55 9.0 22.2 C4.5 19.55 0.8 13.799999999999999 0.8 4.14 C2.6999999999999997 3.91 5.3999999999999995 3.22 9.0 0.8 Z"/></clipPath></defs>
<g clip-path="url(#sh2)">
<rect x="0" y="0" width="9.0" height="11.5" fill="#3A7CC8"/>
<rect x="9.0" y="0" width="9.0" height="11.5" fill="#F2C832"/>
<rect x="0" y="11.5" width="9.0" height="11.5" fill="#F2C832"/>
<rect x="9.0" y="11.5" width="9.0" height="11.5" fill="#2A66B8"/>
<rect x="0" y="0" width="18" height="8.049999999999999" fill="#fff" opacity="0.25"/>
</g>
<path d="M9.0 0.8 C12.6 3.22 15.299999999999999 3.91 17.2 4.14 C17.2 13.799999999999999 13.5 19.55 9.0 22.2 C4.5 19.55 0.8 13.799999999999999 0.8 4.14 C2.6999999999999997 3.91 5.3999999999999995 3.22 9.0 0.8 Z" fill="none" stroke="#8A96A8" stroke-width="1"/>
</svg>
<svg class="a" style="left:306px;top:351px;" width="96" height="98" viewBox="0 0 96 98">
<defs>
<linearGradient id="boxg" x1="0" y1="0" x2="1" y2="0"><stop offset="0" stop-color="#C8EAF0"/><stop offset="0.5" stop-color="#7CCAD4"/><stop offset="1" stop-color="#2A9AA8"/></linearGradient>
<linearGradient id="cdg" x1="0" y1="0" x2="1" y2="1"><stop offset="0" stop-color="#F4F4F4"/><stop offset="0.3" stop-color="#C8C8C8"/><stop offset="0.5" stop-color="#F8F8F8"/><stop offset="0.75" stop-color="#B8B8B8"/><stop offset="1" stop-color="#E8E8E8"/></linearGradient>
</defs>
<path d="M22 4 C35 4 55 6 66 10 C72 14 75 20 75 30 L75 90 L34 92 L22 80 Z" fill="url(#boxg)" stroke="#5AB0BC" stroke-width="0.8"/>
<path d="M22 4 C35 4 55 6 66 10 C72 14 75 20 75 30 L70 30 C70 20 60 14 40 10 Z" fill="#8FD6DC" opacity="0.7"/>
<path d="M33 25 L41 24 L40 33 L32 34 Z M43 24 L52 23 L51 32 L42 33 Z M32 36 L40 35 L39 44 L31 45 Z M42 35 L51 34 L50 43 L41 44 Z" fill="#DDF2F4" opacity="0.8"/>
<ellipse cx="23" cy="72" rx="20" ry="24" fill="url(#cdg)" stroke="#A0A0A0" stroke-width="0.6"/>
<ellipse cx="23" cy="72" rx="5" ry="6" fill="#8AB0B0" stroke="#C8C8C8" stroke-width="1.5"/>
<ellipse cx="23" cy="72" rx="2" ry="2.5" fill="#fff"/>
</svg>
<svg class="a" style="left:361px;top:400px;" width="37" height="44" viewBox="0 0 37 44">
<defs><clipPath id="sh3"><path d="M18.5 0.8 C25.9 6.16 31.45 7.48 36.2 7.92 C36.2 26.4 27.75 37.4 18.5 43.2 C9.25 37.4 0.8 26.4 0.8 7.92 C5.55 7.48 11.1 6.16 18.5 0.8 Z"/></clipPath></defs>
<g clip-path="url(#sh3)">
<rect x="0" y="0" width="18.5" height="22.0" fill="#3A7CC8"/>
<rect x="18.5" y="0" width="18.5" height="22.0" fill="#F2C832"/>
<rect x="0" y="22.0" width="18.5" height="22.0" fill="#F2C832"/>
<rect x="18.5" y="22.0" width="18.5" height="22.0" fill="#2A66B8"/>
<rect x="0" y="0" width="37" height="15.399999999999999" fill="#fff" opacity="0.25"/>
</g>
<path d="M18.5 0.8 C25.9 6.16 31.45 7.48 36.2 7.92 C36.2 26.4 27.75 37.4 18.5 43.2 C9.25 37.4 0.8 26.4 0.8 7.92 C5.55 7.48 11.1 6.16 18.5 0.8 Z" fill="none" stroke="#8A96A8" stroke-width="1"/>
</svg>
<svg class="a" style="left:12px;top:8px;" width="54" height="48" viewBox="0 0 54 48">
<defs>
<linearGradient id="scr" x1="0" y1="0" x2="0" y2="1"><stop offset="0" stop-color="#1010B8"/><stop offset="1" stop-color="#2838D0"/></linearGradient>
<linearGradient id="scrh" x1="0" y1="0" x2="1" y2="1"><stop offset="0" stop-color="#D8E0F8"/><stop offset="1" stop-color="#6878D8"/></linearGradient>
</defs>
<path d="M4.4 11.9 L15.6 10 L15.6 33 L5.6 35 Z" fill="#E6E8F0" stroke="#B0B4C4" stroke-width="0.6"/>
<rect x="5.5" y="13" width="2.2" height="2.2" fill="#333"/>
<path d="M11 32 L21 31 L23 34 L12 35.5 Z" fill="#E8ECF2" stroke="#A8B0C0" stroke-width="0.4"/>
<ellipse cx="30" cy="38.5" rx="11" ry="3.6" fill="#E0E4EA" stroke="#C0C4CC" stroke-width="0.5"/>
<path d="M26 31 L34 32 L35 37 L25 36 Z" fill="#D8DCE4"/>
<path d="M16.3 4.7 L48 8 L46.9 35 L15.6 27.5 Z" fill="#F2F4F8" stroke="#C8CCD8" stroke-width="0.6"/>
<path d="M17.2 5.6 L45.6 8.8 L45 32 L16.6 26 Z" fill="url(#scr)"/>
<path d="M29.4 6.9 L45.6 8.8 L45 32 L33 29.4 Z" fill="url(#scrh)" opacity="0.85"/>
</svg>
<svg class="a" style="left:14px;top:110px;" width="52" height="48" viewBox="0 0 52 48"><g fill="none" stroke="#D47428" stroke-width="1.4" stroke-linejoin="round" opacity="0.95"><path d="M25.0 0.0 L44.9 34.5 L5.1 34.5 Z"/><path d="M36.5 3.1 L36.5 42.9 L2.0 23.0 Z"/><path d="M44.9 11.5 L25.0 46.0 L5.1 11.5 Z"/><path d="M48.0 23.0 L13.5 42.9 L13.5 3.1 Z"/><path d="M42.0 23.0 L25.0 40.0 L8.0 23.0 L25.0 6.0 Z"/><path d="M39.7 31.5 L16.5 37.7 L10.3 14.5 L33.5 8.3 Z"/><path d="M33.5 37.7 L10.3 31.5 L16.5 8.3 L39.7 14.5 Z"/><path d="M25.0 13.0 L33.7 28.0 L16.3 28.0 Z"/><path d="M31.4 15.3 L28.4 32.4 L15.2 21.3 Z"/><path d="M34.8 21.3 L21.6 32.4 L18.6 15.3 Z"/></g></svg>
<svg class="a" style="left:16px;top:144px;" width="15" height="14" viewBox="0 0 15 14"><rect x="0" y="0" width="15" height="14" fill="#F8F6EC"/><path d="M3.5 12.5 C3 8 5.5 5 9.5 4.5 L9 2 L13.5 3.5 L11.5 8 L10.5 6.5 C7.5 7 6 9 5.5 12.5 Z" fill="#1E3C98"/></svg>
<svg class="a" style="left:14px;top:214px;" width="50" height="50" viewBox="0 0 50 50">
<defs><clipPath id="chc"><circle cx="24.5" cy="25" r="23.5"/></clipPath></defs>
<g clip-path="url(#chc)">
<rect x="0" y="0" width="50" height="50" fill="#F7C530"/>
<path d="M24.50 25.00 L24.50 13.30 L84.50 13.30 L84.50 -35.00 L-35.50 -35.00 L-20.63 -29.77 L14.37 30.85 Z" fill="#DB3B30"/>
<path d="M24.50 25.00 L34.63 30.85 L-0.37 91.47 L-35.50 85.00 L-35.50 -29.77 L-20.63 -29.77 L14.37 30.85 Z" fill="#1F9D4A"/>
</g>
<circle cx="24.5" cy="25" r="12" fill="#fff"/>
<circle cx="24.5" cy="25" r="9.5" fill="#3079E8"/>
</svg>
<svg class="a" style="left:16px;top:248px;" width="15" height="14" viewBox="0 0 15 14"><rect x="0" y="0" width="15" height="14" fill="#F8F6EC"/><path d="M3.5 12.5 C3 8 5.5 5 9.5 4.5 L9 2 L13.5 3.5 L11.5 8 L10.5 6.5 C7.5 7 6 9 5.5 12.5 Z" fill="#1E3C98"/></svg>
<svg class="a" style="left:20px;top:320px;" width="44" height="48" viewBox="0 0 44 48">
<rect x="2.5" y="12.5" width="32" height="21" fill="#4A90E0" stroke="#B8D0F0" stroke-width="1.4"/>
<path d="M29 2 C20 4 16 10 17 18 L12 18 L21 27 L29 18 L24 18 C23 12 25 7 29 2 Z" fill="#2CC84A" stroke="#18A030" stroke-width="0.6"/>
</svg>
<svg class="a" style="left:41px;top:343px;" width="20" height="23" viewBox="0 0 20 23">
<defs><clipPath id="sh4"><path d="M10.0 0.8 C14.0 3.22 17.0 3.91 19.2 4.14 C19.2 13.799999999999999 15.0 19.55 10.0 22.2 C5.0 19.55 0.8 13.799999999999999 0.8 4.14 C3.0 3.91 6.0 3.22 10.0 0.8 Z"/></clipPath></defs>
<g clip-path="url(#sh4)">
<rect x="0" y="0" width="10.0" height="11.5" fill="#3A7CC8"/>
<rect x="10.0" y="0" width="10.0" height="11.5" fill="#F2C832"/>
<rect x="0" y="11.5" width="10.0" height="11.5" fill="#F2C832"/>
<rect x="10.0" y="11.5" width="10.0" height="11.5" fill="#2A66B8"/>
<rect x="0" y="0" width="20" height="8.049999999999999" fill="#fff" opacity="0.25"/>
</g>
<path d="M10.0 0.8 C14.0 3.22 17.0 3.91 19.2 4.14 C19.2 13.799999999999999 15.0 19.55 10.0 22.2 C5.0 19.55 0.8 13.799999999999999 0.8 4.14 C3.0 3.91 6.0 3.22 10.0 0.8 Z" fill="none" stroke="#8A96A8" stroke-width="1"/>
</svg>
<svg class="a" style="left:955px;top:631px;" width="40" height="48" viewBox="0 0 40 48">
<defs><linearGradient id="rbg" x1="0" y1="0" x2="1" y2="0"><stop offset="0" stop-color="#F2E8B0"/><stop offset="0.35" stop-color="#FBF6DA"/><stop offset="0.7" stop-color="#EFE2A8"/><stop offset="1" stop-color="#D8C888"/></linearGradient></defs>
<path d="M3 5 L37 5 L32.5 43 L7.5 43 Z" fill="url(#rbg)" stroke="#B8A870" stroke-width="0.8"/>
<ellipse cx="20" cy="5" rx="17" ry="3.2" fill="#E8E4D0" stroke="#7A7260" stroke-width="1.3"/>
<path d="M9 34 C14 38 26 38 31 34 L32 43 L8 43 Z" fill="#D8DCE8" opacity="0.9"/>
<ellipse cx="20" cy="43.5" rx="12.5" ry="2.6" fill="#B8BCC8" stroke="#6A7080" stroke-width="0.8"/>
<path d="M11 16 C13 12 18 12 20 15" fill="none" stroke="#3A62D0" stroke-width="2.8"/>
<path d="M22 20 C25 23 24 28 20 29" fill="none" stroke="#2A52C0" stroke-width="3"/>
<path d="M12 29 C9 27 9 22 11 20" fill="none" stroke="#4A72D8" stroke-width="2.6"/>
</svg>
<svg class="a" style="left:0px;top:728px;" width="1024" height="40" viewBox="0 0 1024 40">
<defs><linearGradient id="tbo" x1="0" y1="0" x2="1" y2="0"><stop offset="0" stop-color="#C9883C"/><stop offset="0.6" stop-color="#C6843A"/><stop offset="1" stop-color="#BC7A38"/></linearGradient></defs>
<rect x="0" y="0" width="492" height="40" fill="url(#tbo)"/>
<path d="M490 0 L584 0 L591 40 L490 40 Z" fill="#9F8342"/>
<rect x="0" y="0" width="1024" height="1" fill="#000" opacity="0.08"/>
<path d="M584 0 L1024 0 L1024 40 L591 40 Z" fill="#BCA879"/>
</svg>
<svg class="a" style="left:11px;top:733px;" width="29" height="28" viewBox="0 0 29 28"><path d="M1 4.5 L12.5 2.8 L12.5 13 L1 13 Z M14.3 2.5 L27.5 0.5 L27.5 13 L14.3 13 Z M1 14.8 L12.5 14.8 L12.5 25 L1 23.4 Z M14.3 14.8 L27.5 14.8 L27.5 27.5 L14.3 25.4 Z" fill="#FFF8EC"/></svg>
<svg class="a" style="left:64px;top:729px;" width="34" height="36" viewBox="0 0 34 36">
<defs><linearGradient id="ieg" x1="0" y1="0" x2="0.4" y2="1"><stop offset="0" stop-color="#7EE4F8"/><stop offset="0.5" stop-color="#4CC4F0"/><stop offset="1" stop-color="#2A90D8"/></linearGradient></defs>
<path d="M17 8 C9 8 4 14 4 21 C4 28 9 33 17 33 C23 33 27 30 29 25 L21 25 C20 27 19 28 17 28 C13 28 11 26 11 23 L29 23 C29.5 21 29.5 19 29 17 C27 11 23 8 17 8 Z M11 18 C11.5 15 14 13 17 13 C20 13 22 15 22.5 18 Z" fill="url(#ieg)" stroke="#1E6A98" stroke-width="0.8"/>
<path d="M4 31 C0 26 6 16 16 9 C25 3 32 2 33 5 C34 8 29 13 26 15 C29 11 31 7 29 6 C26 5 18 9 12 15 C6 21 3 28 6 31 C8 33 12 32 16 30 C12 33 6 34 4 31 Z" fill="#F2B824"/>
</svg>
<div class="a" style="left:113px;top:728px;width:60px;height:40px;background:#CDB083;border:1px solid #F2E6CC;box-shadow:0 0 0 1px rgba(120,80,30,0.35)"></div>
<svg class="a" style="left:126px;top:732px;" width="34" height="32" viewBox="0 0 34 32">
<rect x="2" y="6" width="30" height="22" fill="#F3DE8E" stroke="#C8A850" stroke-width="0.6"/>
<rect x="2" y="3" width="14" height="5" fill="#F0D070"/>
<rect x="4" y="3" width="3.5" height="2.5" fill="#3AAA3A"/><rect x="10" y="3.5" width="3.5" height="2.5" fill="#D83A2A"/><rect x="19" y="4.5" width="3.5" height="2.5" fill="#3A7AD8"/>
<rect x="2" y="9" width="30" height="3" fill="#FAF0C8"/>
<path d="M6 17 L28 17 L28 29 L23 29 L23 23 L11 23 L11 29 L6 29 Z" fill="#5AB8E8" stroke="#2A88C8" stroke-width="0.8"/>
</svg>
<svg class="a" style="left:190px;top:733px;" width="31" height="31" viewBox="0 0 31 31">
<rect x="0" y="0" width="31" height="31" fill="#138A1E"/>
<path d="M7 11 L24 11 L23 25 L8 27 Z" fill="#fff"/>
<path d="M11.5 11 C11.5 5 19.5 5 19.5 11" fill="none" stroke="#fff" stroke-width="2"/>
<rect x="11" y="14.5" width="4" height="4" fill="#138A1E"/><rect x="16" y="14.5" width="4" height="4" fill="#138A1E"/>
<rect x="11" y="19.5" width="4" height="4" fill="#138A1E"/><rect x="16" y="19.5" width="4" height="4" fill="#138A1E"/>
</svg>
<div class="a" style="left:238px;top:728px;width:59px;height:40px;background:#C29B5A;border:1px solid rgba(238,218,170,0.8);box-shadow:0 0 0 1px rgba(120,80,30,0.3)"></div>
<svg class="a" style="left:250px;top:735px;" width="34" height="27" viewBox="0 0 34 27"><rect x="1.8" y="1.8" width="30.4" height="23.4" fill="#fff" stroke="#000" stroke-width="2.4"/><rect x="6" y="6.5" width="13" height="14.5" fill="#000"/><path d="M8 8.5 H16.5 V10.5 L13 19.5 H10.5 L14 11 H8 Z" fill="#fff"/><path d="M21 11.5 H28.5 V13.5 L24 19 H28.5 V21 H21 V19 L25.5 13.5 H21 Z" fill="#000"/></svg>
<svg class="a" style="left:876px;top:745px;" width="12" height="8" viewBox="0 0 12 8"><path d="M1 7 L6 2 L11 7 Z" fill="#F8F0E0"/></svg>
<svg class="a" style="left:897px;top:740px;" width="19" height="17" viewBox="0 0 19 17">
<circle cx="5" cy="5" r="3.5" fill="none" stroke="#FFF6E6" stroke-width="1.4"/>
<path d="M5 8.5 L5 16" stroke="#FFF6E6" stroke-width="1.4"/>
<rect x="7.5" y="3" width="10" height="8" fill="rgba(255,245,230,0.25)" stroke="#FFF6E6" stroke-width="1.3"/>
<path d="M12.5 11 L12.5 14 M9 15 H16" stroke="#FFF6E6" stroke-width="1.4"/>
</svg>
<svg class="a" style="left:921px;top:741px;" width="19" height="16" viewBox="0 0 19 16">
<path d="M1.5 5 L5 5 L9.5 1 L9.5 15 L5 11 L1.5 11 Z" fill="rgba(255,245,230,0.3)" stroke="#FFF6E6" stroke-width="1.3"/>
<path d="M12 5 C13.5 6.5 13.5 9.5 12 11 M14.5 3 C17 5.5 17 10.5 14.5 13" fill="none" stroke="#FFF6E6" stroke-width="1.3"/>
</svg>
<div class="t" style="left:959.00px;top:734.84px;font-size:12px;color:#FFF6E6;transform:scaleX(0.9766);transform-origin:0 0;">3:22 AM</div>
<div class="t" style="left:956.00px;top:751.84px;font-size:12px;color:#FFF6E6;transform:scaleX(0.9552);transform-origin:0 0;">1/29/2023</div>
</body></html>
